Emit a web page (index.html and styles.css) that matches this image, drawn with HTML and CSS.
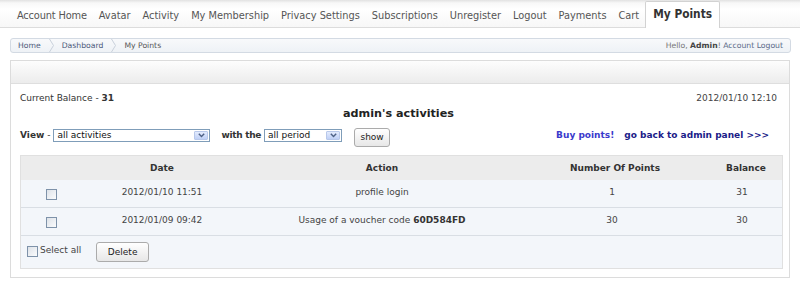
FILE: index.html
```html
<!DOCTYPE html>
<html>
<head>
<meta charset="utf-8">
<title>My Points</title>
<link rel="stylesheet" href="styles.css">
</head>
<body>
<nav class="tabs">
  <a class="tab">Account Home</a>
  <a class="tab">Avatar</a>
  <a class="tab">Activity</a>
  <a class="tab">My Membership</a>
  <a class="tab">Privacy Settings</a>
  <a class="tab">Subscriptions</a>
  <a class="tab">Unregister</a>
  <a class="tab">Logout</a>
  <a class="tab">Payments</a>
  <a class="tab">Cart</a>
  <a class="tab active">My Points</a>
</nav>

<div class="crumbs">
  <div class="trail">
    <a class="crumb">Home</a>
    <svg class="sep" width="5" height="13" viewBox="0 0 5 13"><polyline points="0.5,0 4.5,6.5 0.5,13" fill="none" stroke="#c9d1db" stroke-width="1"/></svg>
    <a class="crumb">Dashboard</a>
    <svg class="sep" width="5" height="13" viewBox="0 0 5 13"><polyline points="0.5,0 4.5,6.5 0.5,13" fill="none" stroke="#c9d1db" stroke-width="1"/></svg>
    <span class="crumb current">My Points</span>
  </div>
  <div class="hello">Hello, <b>Admin</b>! <a class="logout">Account Logout</a></div>
</div>

<div class="panel">
  <div class="panel-head"></div>
  <div class="panel-body">
    <div class="balance-row">
      <span>Current Balance - <b>31</b></span>
      <span>2012/01/10 12:10</span>
    </div>
    <h2 class="title">admin's activities</h2>
    <div class="controls">
      <div class="filters">
        <span class="label"><b>View</b> -</span>
        <div class="select wide"><span class="value">all activities</span><span class="arrow"><svg width="7" height="5" viewBox="0 0 7 5"><polyline points="0.8,0.8 3.5,3.6 6.2,0.8" fill="none" stroke="#4d6185" stroke-width="1.4"/></svg></span></div>
        <span class="label with"><b>with the</b></span>
        <div class="select narrow"><span class="value">all period</span><span class="arrow"><svg width="7" height="5" viewBox="0 0 7 5"><polyline points="0.8,0.8 3.5,3.6 6.2,0.8" fill="none" stroke="#4d6185" stroke-width="1.4"/></svg></span></div>
        <button class="btn show">show</button>
      </div>
      <div class="links">
        <a class="buy">Buy points!</a>
        <a class="back">go back to admin panel &gt;&gt;&gt;</a>
      </div>
    </div>
    <table class="grid">
      <colgroup>
        <col class="c1"><col class="c2"><col class="c3"><col class="c4"><col class="c5">
      </colgroup>
      <thead>
        <tr><th></th><th>Date</th><th>Action</th><th>Number Of Points</th><th>Balance</th></tr>
      </thead>
      <tbody>
        <tr><td><input type="checkbox" class="cb"></td><td>2012/01/10 11:51</td><td>profile login</td><td>1</td><td>31</td></tr>
        <tr><td><input type="checkbox" class="cb"></td><td>2012/01/09 09:42</td><td>Usage of a voucher code <b>60D584FD</b></td><td>30</td><td>30</td></tr>
      </tbody>
      <tfoot>
        <tr><td colspan="5" class="foot">
          <div class="foot-row">
            <label class="selall"><input type="checkbox" class="cb"><span>Select all</span></label>
            <button class="btn del">Delete</button>
          </div>
        </td></tr>
      </tfoot>
    </table>
  </div>
</div>
</body>
</html>
```

FILE: styles.css
```css
* { box-sizing: border-box; }
html, body { margin: 0; padding: 0; background: #fff; }
body {
  width: 800px;
  height: 282px;
  overflow: hidden;
  font-family: "DejaVu Sans", Verdana, sans-serif;
  font-size: 9px;
  color: #333;
}
a { color: inherit; text-decoration: none; }
b { font-weight: bold; }

/* tabs */
.tabs {
  display: flex;
  align-items: flex-start;
  height: 28px;
  padding-left: 11px;
  border-bottom: 1px solid #dcdcdc;
  background: linear-gradient(#e2e2e2 0, #f8f8f8 3px, #fff 9px, #f7f7f7 100%);
  font-family: "DejaVu Sans Condensed", "DejaVu Sans", sans-serif;
  font-stretch: condensed;
}
.tab {
  height: 27px;
  padding: 5px 6px 0;
  line-height: 22px;
  font-size: 10.9px;
  color: #555;
  white-space: nowrap;
}
.tab:first-child { padding-left: 6px; letter-spacing: -0.15px; }
.tab.active {
  margin-top: 1px;
  padding: 1px 7px 0;
  height: 27px;
  border: 1px solid #d2d2d2;
  border-bottom: 0;
  border-radius: 2px 2px 0 0;
  background: #fff;
  font-weight: bold;
  font-size: 11.8px;
  color: #333;
  letter-spacing: 0;
}

/* breadcrumbs */
.crumbs {
  display: flex;
  justify-content: space-between;
  align-items: center;
  height: 15px;
  margin: 10px 9px 0 10px;
  padding: 0 7px;
  border: 1px solid #d3dae3;
  border-radius: 3px;
  background: linear-gradient(#f8f9fb, #eef2f6);
  font-size: 7.7px;
  line-height: 13px;
}
.trail { display: flex; align-items: center; height: 13px; }
.crumb { color: #4c5a7a; }
.crumb.current { color: #555; }
.sep { display: block; margin: 0 8px 0 8px; }
.hello { color: #777; }
.hello b { color: #444; }
.logout { color: #5a6a88; }

/* panel */
.panel {
  margin: 7px 10px 0 10px;
  border: 1px solid #dcdcdc;
}
.panel-head {
  height: 23px;
  border-bottom: 1px solid #dedede;
  background: linear-gradient(#fdfdfd, #ececec);
}
.panel-body {
  padding: 8px 12px 8px 9px;
}
.balance-row {
  display: flex;
  justify-content: space-between;
  line-height: 12px;
  color: #333;
}
.balance-row span:last-child { color: #444; }
.title {
  margin: 3px 0 0;
  text-align: center;
  font-size: 11.2px;
  line-height: 14px;
  font-weight: bold;
  color: #222;
}
.controls {
  display: flex;
  justify-content: space-between;
  align-items: flex-start;
  height: 20px;
  margin-top: 7px;
}
.filters { display: flex; align-items: flex-start; }
.label { margin-top: 1px; line-height: 12px; color: #333; }
.label.with { margin-left: 11px; letter-spacing: -0.3px; }
.select {
  display: flex;
  align-items: center;
  height: 13px;
  margin-top: 1px;
  margin-left: 3px;
  border: 1px solid #7f9db9;
  background: #fff;
  padding-left: 3px;
  color: #111;
  line-height: 11px;
}
.select.wide { width: 157px; }
.select.narrow { width: 78px; margin-left: 3px; }
.select .value { flex: 1; }
.arrow {
  display: flex;
  align-items: center;
  justify-content: center;
  width: 14px;
  height: 9px;
  margin-right: 1px;
  border: 1px solid #b8c8ea;
  border-radius: 1px;
  background: linear-gradient(#e3ebfd, #bfd0f6);
}
.btn {
  height: 19px;
  padding: 0;
  border: 1px solid #ababab;
  border-radius: 3px;
  background: linear-gradient(#ffffff, #e7e7e7);
  font-family: "DejaVu Sans", Verdana, sans-serif;
  font-size: 9px;
  color: #222;
  line-height: 17px;
}
.btn.show { width: 36px; margin-left: 12px; }
.links { display: flex; margin-top: 1px; margin-right: 8px; line-height: 12px; font-weight: bold; }
.buy { color: #3a3acc; }
.back { color: #1b1b88; margin-left: 10px; }

/* table */
.grid {
  width: 761px;
  margin: 7px 0 0 0;
  table-layout: fixed;
  border-collapse: separate;
  border-spacing: 0;
  border: 1px solid #e0e0e0;
  color: #444;
}
.c1 { width: 61px; }
.c2 { width: 160px; }
.c3 { width: 280px; }
.c4 { width: 180px; }
.c5 { width: 80px; }
.grid th {
  height: 24px;
  padding: 0;
  background: #ececec;
  font-weight: bold;
  color: #333;
  text-align: center;
  line-height: 12px;
}
.grid th:nth-child(4) { padding-left: 6px; }
.grid th:nth-child(5) { padding-left: 8px; }
.grid tbody td {
  height: 28px;
  padding: 0 0 3px;
  background: #f3f6fa;
  border-bottom: 1px solid #d9dee4;
  text-align: center;
  line-height: 12px;
}
.grid tbody td:first-child { padding: 0; }
.grid tbody td b { color: #333; }
.cb {
  -webkit-appearance: none;
  appearance: none;
  display: inline-block;
  width: 11px;
  height: 11px;
  margin: 0;
  border: 1px solid #7e92a9;
  background: linear-gradient(135deg, #dde2e8, #fbfcfd);
  vertical-align: middle;
}
.grid tbody .cb { margin-left: 0; margin-top: 1px; }
.grid td.foot {
  height: 32px;
  padding: 6px 6px 0;
  background: #f3f6fa;
  text-align: left;
  vertical-align: top;
}
.foot-row { display: flex; align-items: flex-start; }
.selall { display: flex; align-items: center; margin-top: 4px; color: #444; }
.selall .cb { width: 11px; height: 11px; }
.selall span { margin-left: 2px; line-height: 10px; margin-top: -3px; }
.btn.del { width: 53px; height: 20px; margin-left: 15px; line-height: 18px; }
```
